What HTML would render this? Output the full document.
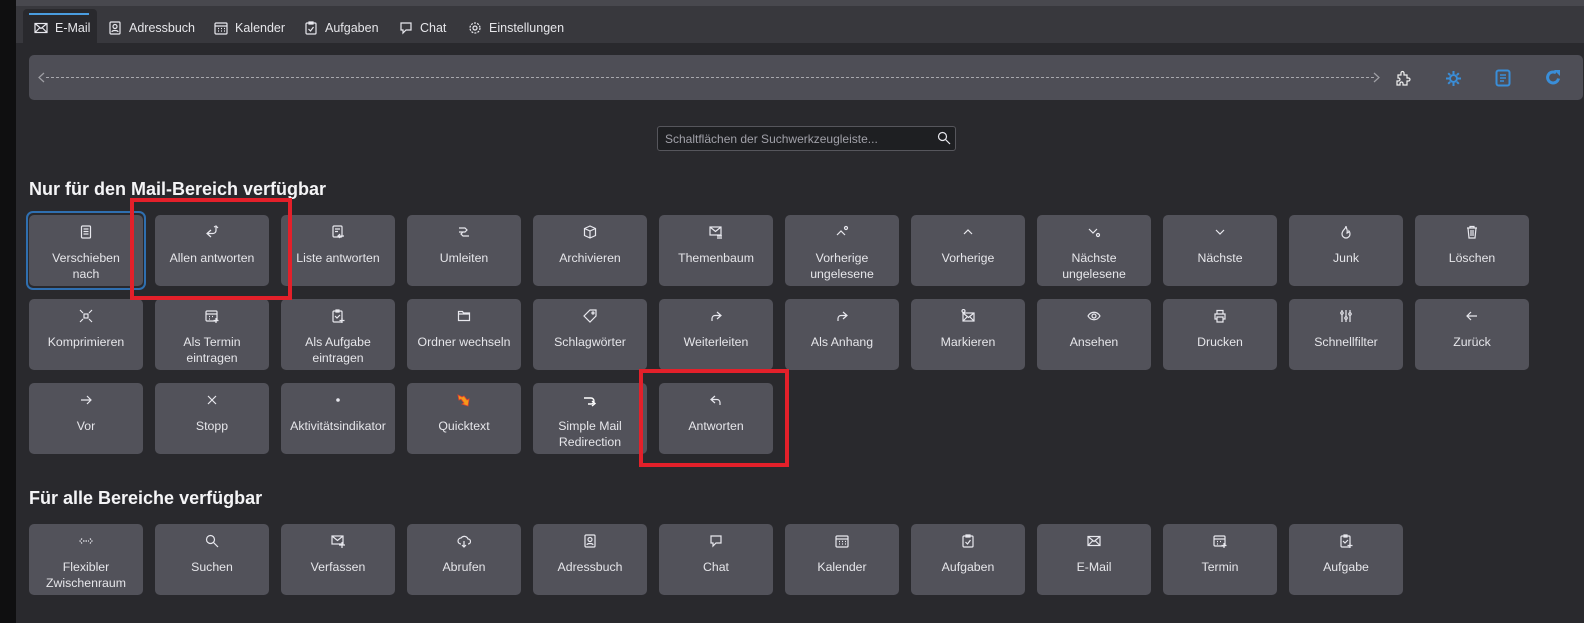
<!DOCTYPE html>
<html><head><meta charset="utf-8"><style>
*{margin:0;padding:0;box-sizing:border-box}
body{width:1584px;height:623px;overflow:hidden;background:#29292d;font-family:"Liberation Sans",sans-serif;color:#e6e6ea;position:relative}
.abs{position:absolute}
.left{left:0;top:0;width:16px;height:623px;background:#0f0f10}
.top{left:16px;top:0;width:1568px;height:6px;background:#48484e}
.tabbar{left:16px;top:6px;width:1568px;height:37px;background:#38383d}
.tab{position:absolute;top:3px;height:37px;display:flex;align-items:center;font-size:12.5px;color:#e6e6ea}
.tab svg{margin-right:7px}
.act{left:23px;top:9px;width:74px;height:34px;background:#29292d;border-radius:4px 4px 0 0}
.act i{position:absolute;left:6px;top:4px;width:60px;height:2px;background:#4a9de0}
.tb{left:29px;top:55px;width:1554px;height:45px;background:#4e4e56;border-radius:5px}
.dash{left:46px;top:77px;width:1328px;border-top:1px dashed #a8a8ae}
.search{left:657px;top:126px;width:299px;height:25px;background:#1e1f22;border:1px solid #56565c;border-radius:3px;font-size:12px;color:#a0a0a8;padding:5px 0 0 7px}
h2{position:absolute;left:29px;font-size:18px;font-weight:bold;color:#f4f4f6}
.b{position:absolute;width:114px;height:71px;background:#52525a;border-radius:5px;text-align:center;font-size:12.3px;line-height:16px}
.b svg{position:absolute;left:50px;top:10px}
.b span{position:absolute;left:0;right:0;top:35px}
.red{position:absolute;border:4px solid #e3202a}
svg{fill:none;stroke:#e8e8ee;stroke-width:1.2}
</style></head><body>
<div class="abs left"></div><div class="abs top"></div><div class="abs tabbar">
<div class="abs act" style="left:7px;top:3px"><i></i></div>
<div class="tab" style="left:18px"><svg width="14" height="14" viewBox="0 0 14 14"><rect x="1" y="2.5" width="12" height="9"/><path d="M1 2.5l6 5 6-5M1 11.5l4.5-4.5M13 11.5L8.5 7"/></svg>E-Mail</div>
<div class="tab" style="left:92px"><svg width="14" height="14" viewBox="0 0 14 14"><rect x="2" y="1" width="10" height="12" rx="1"/><circle cx="7" cy="5.5" r="2"/><path d="M4 11c0-2 6-2 6 0"/></svg>Adressbuch</div>
<div class="tab" style="left:198px"><svg width="14" height="14" viewBox="0 0 14 14"><rect x="1" y="2" width="12" height="11" rx="1"/><path d="M1 5h12M4 7.5h1M7 7.5h1M10 7.5h1M4 10h1M7 10h1M10 10h1"/></svg>Kalender</div>
<div class="tab" style="left:288px"><svg width="14" height="14" viewBox="0 0 14 14"><rect x="2" y="2" width="10" height="11" rx="1"/><path d="M5 1h4v2H5zM4.5 8l2 2 3-4"/></svg>Aufgaben</div>
<div class="tab" style="left:383px"><svg width="14" height="14" viewBox="0 0 14 14"><path d="M2 2h10v7H7l-3 3V9H2z"/></svg>Chat</div>
<div class="tab" style="left:452px"><svg width="14" height="14" viewBox="0 0 14 14"><circle cx="7" cy="7" r="2"/><circle cx="7" cy="7" r="5" stroke-dasharray="2 1.2"/></svg>Einstellungen</div>
</div>
<div class="abs tb"></div>
<div class="abs dash"></div>
<svg class="abs" style="left:37px;top:72px" width="10" height="11" viewBox="0 0 10 11"><path d="M7 1L2 5.5 7 10" stroke="#a0a0a6"/></svg>
<svg class="abs" style="left:1371px;top:72px" width="10" height="11" viewBox="0 0 10 11"><path d="M3 1l5 4.5L3 10" stroke="#a0a0a6"/></svg>
<svg class="abs" style="left:1395px;top:70px" width="17" height="17" viewBox="0 0 17 17"><path d="M3 5h3V3a1.5 1.5 0 013 0v2h3v3h1.5a1.5 1.5 0 010 3H12v4H8v-1.5a1.5 1.5 0 00-3 0V15H2v-4h1.5a1.5 1.5 0 000-3H3z" stroke="#f0f0f0"/></svg>
<svg class="abs" style="left:1445px;top:70px" width="17" height="17" viewBox="0 0 17 17"><circle cx="8.5" cy="8.5" r="3.5" stroke="#3a8ed8" stroke-width="2"/><path d="M8.5 1v3M8.5 13v3M1 8.5h3M13 8.5h3M3.2 3.2l2 2M11.8 11.8l2 2M3.2 13.8l2-2M11.8 5.2l2-2" stroke="#3a8ed8" stroke-width="2"/></svg>
<svg class="abs" style="left:1495px;top:69px" width="16" height="18" viewBox="0 0 16 18"><rect x="1.5" y="1.5" width="13" height="15" rx="2" stroke="#3a8ed8" stroke-width="2"/><path d="M5 6h6M5 9h6M5 12h4" stroke="#3a8ed8" stroke-width="1.4"/></svg>
<svg class="abs" style="left:1545px;top:69px" width="17" height="17" viewBox="0 0 17 17"><path d="M13.5 9.5A5.5 5.5 0 1 1 11 3.8" stroke="#3a8ed8" stroke-width="3"/><path d="M9 1h6v6z" fill="#3a8ed8" stroke="none"/></svg>
<div class="abs search">Schaltflächen der Suchwerkzeugleiste...</div>
<svg class="abs" style="left:937px;top:131px" width="14" height="14" viewBox="0 0 14 14"><circle cx="5.5" cy="5.5" r="4"/><path d="M8.5 8.5L13 13"/></svg>

<h2 style="top:179px">Nur für den Mail-Bereich verfügbar</h2>
<h2 style="top:488px">Für alle Bereiche verfügbar</h2>

<div class="abs" style="left:26px;top:211px;width:120px;height:79px;border:2px solid #2f6fb0;border-radius:7px"></div>

<!-- row1 -->
<div class="b" style="left:29px;top:215px"><svg width="14" height="14" viewBox="0 0 14 14"><rect x="2.5" y="1" width="9" height="12" rx="1"/><path d="M4.5 4h5M4.5 6.5h5M4.5 9h5"/></svg><span>Verschieben<br>nach</span></div>
<div class="b" style="left:155px;top:215px"><svg width="14" height="14" viewBox="0 0 14 14"><path d="M6 5L2 8.5 6 12M2 8.5h6a3 3 0 003-3V2M9 2l2-1 2 2"/></svg><span>Allen antworten</span></div>
<div class="b" style="left:281px;top:215px"><svg width="14" height="14" viewBox="0 0 14 14"><rect x="2" y="1" width="9" height="11" rx="1"/><path d="M4 4h5M4 6.5h3M9 9l-2 2 2 2M7 11h6"/></svg><span>Liste antworten</span></div>
<div class="b" style="left:407px;top:215px"><svg width="14" height="14" viewBox="0 0 14 14"><path d="M2 3h6l2 2-2 2H2M12 11H6l-2-2 2-2"/></svg><span>Umleiten</span></div>
<div class="b" style="left:533px;top:215px"><svg width="14" height="14" viewBox="0 0 14 14"><path d="M1.5 3.5L7 1l5.5 2.5v7L7 13l-5.5-2.5zM1.5 3.5L7 6l5.5-2.5M7 6v7"/></svg><span>Archivieren</span></div>
<div class="b" style="left:659px;top:215px"><svg width="14" height="14" viewBox="0 0 14 14"><rect x="1" y="2" width="11" height="8"/><path d="M1 2l5.5 4.5L12 2M8 11h5M8 13h5"/></svg><span>Themenbaum</span></div>
<div class="b" style="left:785px;top:215px"><svg width="14" height="14" viewBox="0 0 14 14"><path d="M2 10l4-4 4 4"/><circle cx="11" cy="3" r="1.5"/></svg><span>Vorherige<br>ungelesene</span></div>
<div class="b" style="left:911px;top:215px"><svg width="14" height="14" viewBox="0 0 14 14"><path d="M3 9l4-4 4 4"/></svg><span>Vorherige</span></div>
<div class="b" style="left:1037px;top:215px"><svg width="14" height="14" viewBox="0 0 14 14"><path d="M2 4l4 4 4-4"/><circle cx="11" cy="10" r="1.5"/></svg><span>Nächste<br>ungelesene</span></div>
<div class="b" style="left:1163px;top:215px"><svg width="14" height="14" viewBox="0 0 14 14"><path d="M3 5l4 4 4-4"/></svg><span>Nächste</span></div>
<div class="b" style="left:1289px;top:215px"><svg width="14" height="14" viewBox="0 0 14 14"><path d="M7 1c0 3-4 4-4 8a4 4 0 008 0c0-2-1-3-1-3 0 1-1 2-2 2 1-3-1-5-1-7z"/></svg><span>Junk</span></div>
<div class="b" style="left:1415px;top:215px"><svg width="14" height="14" viewBox="0 0 14 14"><path d="M2 3h10M5 3V1.5h4V3M3 3l1 10h6l1-10M6 5v6M8 5v6"/></svg><span>Löschen</span></div>
<!-- row2 -->
<div class="b" style="left:29px;top:299px"><svg width="14" height="14" viewBox="0 0 14 14"><rect x="5" y="5" width="4" height="4"/><path d="M1 1l3 3M13 1l-3 3M1 13l3-3M13 13l-3-3"/></svg><span>Komprimieren</span></div>
<div class="b" style="left:155px;top:299px"><svg width="14" height="14" viewBox="0 0 14 14"><rect x="1" y="2" width="11" height="10" rx="1"/><path d="M1 5h11M4 7.5h1M7 7.5h1M4 10h1M11 9v5M8.5 11.5h5"/></svg><span>Als Termin<br>eintragen</span></div>
<div class="b" style="left:281px;top:299px"><svg width="14" height="14" viewBox="0 0 14 14"><rect x="2" y="2" width="9" height="11" rx="1"/><path d="M5 1h3v2H5zM4 7l2 2 3-3M11 9v5M8.5 11.5h5"/></svg><span>Als Aufgabe<br>eintragen</span></div>
<div class="b" style="left:407px;top:299px"><svg width="14" height="14" viewBox="0 0 14 14"><path d="M1.5 2.5h4l1 1.5h6v7.5h-11zM1.5 5h11"/></svg><span>Ordner wechseln</span></div>
<div class="b" style="left:533px;top:299px"><svg width="14" height="14" viewBox="0 0 14 14"><path d="M7 1h6v6l-6 6-6-6z"/><circle cx="10" cy="4" r="1"/></svg><span>Schlagwörter</span></div>
<div class="b" style="left:659px;top:299px"><svg width="14" height="14" viewBox="0 0 14 14"><path d="M8 3l4 3.5L8 10M12 6.5H6a3 3 0 00-3 3V12"/></svg><span>Weiterleiten</span></div>
<div class="b" style="left:785px;top:299px"><svg width="14" height="14" viewBox="0 0 14 14"><path d="M8 3l4 3.5L8 10M12 6.5H6a3 3 0 00-3 3V12"/></svg><span>Als Anhang</span></div>
<div class="b" style="left:911px;top:299px"><svg width="14" height="14" viewBox="0 0 14 14"><rect x="2" y="4" width="11" height="8"/><path d="M2 4l5.5 4.5L13 4M2 12l4-4M13 12l-4-4"/><circle cx="2.5" cy="2" r="1.5"/></svg><span>Markieren</span></div>
<div class="b" style="left:1037px;top:299px"><svg width="14" height="14" viewBox="0 0 14 14"><path d="M1 7c3-5 9-5 12 0-3 5-9 5-12 0z"/><circle cx="7" cy="7" r="2"/></svg><span>Ansehen</span></div>
<div class="b" style="left:1163px;top:299px"><svg width="14" height="14" viewBox="0 0 14 14"><path d="M4 5V1.5h6V5M4 10H2V5h10v5h-2M4 8h6v5H4z"/></svg><span>Drucken</span></div>
<div class="b" style="left:1289px;top:299px"><svg width="14" height="14" viewBox="0 0 14 14"><path d="M3 1v12M7 1v12M11 1v12"/><circle cx="3" cy="4" r="1.2" fill="#52525a"/><circle cx="7" cy="9" r="1.2" fill="#52525a"/><circle cx="11" cy="5" r="1.2" fill="#52525a"/></svg><span>Schnellfilter</span></div>
<div class="b" style="left:1415px;top:299px"><svg width="14" height="14" viewBox="0 0 14 14"><path d="M6 3L2 7l4 4M2 7h10"/></svg><span>Zurück</span></div>
<!-- row3 -->
<div class="b" style="left:29px;top:383px"><svg width="14" height="14" viewBox="0 0 14 14"><path d="M8 3l4 4-4 4M12 7H2"/></svg><span>Vor</span></div>
<div class="b" style="left:155px;top:383px"><svg width="14" height="14" viewBox="0 0 14 14"><path d="M3 3l8 8M11 3l-8 8"/></svg><span>Stopp</span></div>
<div class="b" style="left:281px;top:383px"><svg width="14" height="14" viewBox="0 0 14 14"><circle cx="7" cy="7" r="1.2" fill="#e8e8ee"/></svg><span>Aktivitätsindikator</span></div>
<div class="b" style="left:407px;top:383px"><svg width="14" height="14" viewBox="0 0 14 14"><path d="M1 2l4 2 2-1 3 4 2-1-1 7-6-2 2-1-3-4-2 1z" fill="#f39a1a" stroke="#e8442a" stroke-width="0.8"/></svg><span>Quicktext</span></div>
<div class="b" style="left:533px;top:383px"><svg width="14" height="14" viewBox="0 0 14 14"><path d="M1 5h7a3 3 0 010 6H5M9 8l3 2.5-3 2.5" stroke="#fff" stroke-width="1.4"/></svg><span>Simple Mail<br>Redirection</span></div>
<div class="b" style="left:659px;top:383px"><svg width="14" height="14" viewBox="0 0 14 14"><path d="M6 3L2 6.5 6 10M2 6.5h6a3 3 0 013 3V12"/></svg><span>Antworten</span></div>
<!-- row4 -->
<div class="b" style="left:29px;top:524px"><svg width="14" height="14" viewBox="0 0 14 14"><path d="M3 4.5L1 7l2 2.5M11 4.5L13 7l-2 2.5M4 7h6" stroke-dasharray="1.5 1"/></svg><span>Flexibler<br>Zwischenraum</span></div>
<div class="b" style="left:155px;top:524px"><svg width="14" height="14" viewBox="0 0 14 14"><circle cx="5.5" cy="5.5" r="4"/><path d="M8.5 8.5L13 13"/></svg><span>Suchen</span></div>
<div class="b" style="left:281px;top:524px"><svg width="14" height="14" viewBox="0 0 14 14"><rect x="1" y="2" width="11" height="8"/><path d="M1 2l5.5 4.5L12 2M11 8v6M8 11h6"/></svg><span>Verfassen</span></div>
<div class="b" style="left:407px;top:524px"><svg width="14" height="14" viewBox="0 0 14 14"><path d="M4 10a3 3 0 010-6 4 4 0 017 1 2.5 2.5 0 010 5M7 7v6M5 11l2 2 2-2"/></svg><span>Abrufen</span></div>
<div class="b" style="left:533px;top:524px"><svg width="14" height="14" viewBox="0 0 14 14"><rect x="2" y="1" width="10" height="12" rx="1"/><circle cx="7" cy="5.5" r="2"/><path d="M4 11c0-2 6-2 6 0"/></svg><span>Adressbuch</span></div>
<div class="b" style="left:659px;top:524px"><svg width="14" height="14" viewBox="0 0 14 14"><path d="M2 2h10v7H7l-3 3V9H2z"/></svg><span>Chat</span></div>
<div class="b" style="left:785px;top:524px"><svg width="14" height="14" viewBox="0 0 14 14"><rect x="1" y="2" width="12" height="11" rx="1"/><path d="M1 5h12M4 7.5h1M7 7.5h1M10 7.5h1M4 10h1M7 10h1M10 10h1"/></svg><span>Kalender</span></div>
<div class="b" style="left:911px;top:524px"><svg width="14" height="14" viewBox="0 0 14 14"><rect x="2" y="2" width="10" height="11" rx="1"/><path d="M5 1h4v2H5zM4.5 8l2 2 3-4"/></svg><span>Aufgaben</span></div>
<div class="b" style="left:1037px;top:524px"><svg width="14" height="14" viewBox="0 0 14 14"><rect x="1" y="2.5" width="12" height="9"/><path d="M1 2.5l6 5 6-5M1 11.5l4.5-4.5M13 11.5L8.5 7"/></svg><span>E-Mail</span></div>
<div class="b" style="left:1163px;top:524px"><svg width="14" height="14" viewBox="0 0 14 14"><rect x="1" y="2" width="11" height="10" rx="1"/><path d="M1 5h11M4 7.5h1M7 7.5h1M4 10h1M11 9v5M8.5 11.5h5"/></svg><span>Termin</span></div>
<div class="b" style="left:1289px;top:524px"><svg width="14" height="14" viewBox="0 0 14 14"><rect x="2" y="2" width="9" height="11" rx="1"/><path d="M5 1h3v2H5zM4 7l2 2 3-3M11 9v5M8.5 11.5h5"/></svg><span>Aufgabe</span></div>

<div class="red" style="left:130px;top:198px;width:162px;height:102px"></div>
<div class="red" style="left:639px;top:369px;width:150px;height:98px"></div>
</body></html>
